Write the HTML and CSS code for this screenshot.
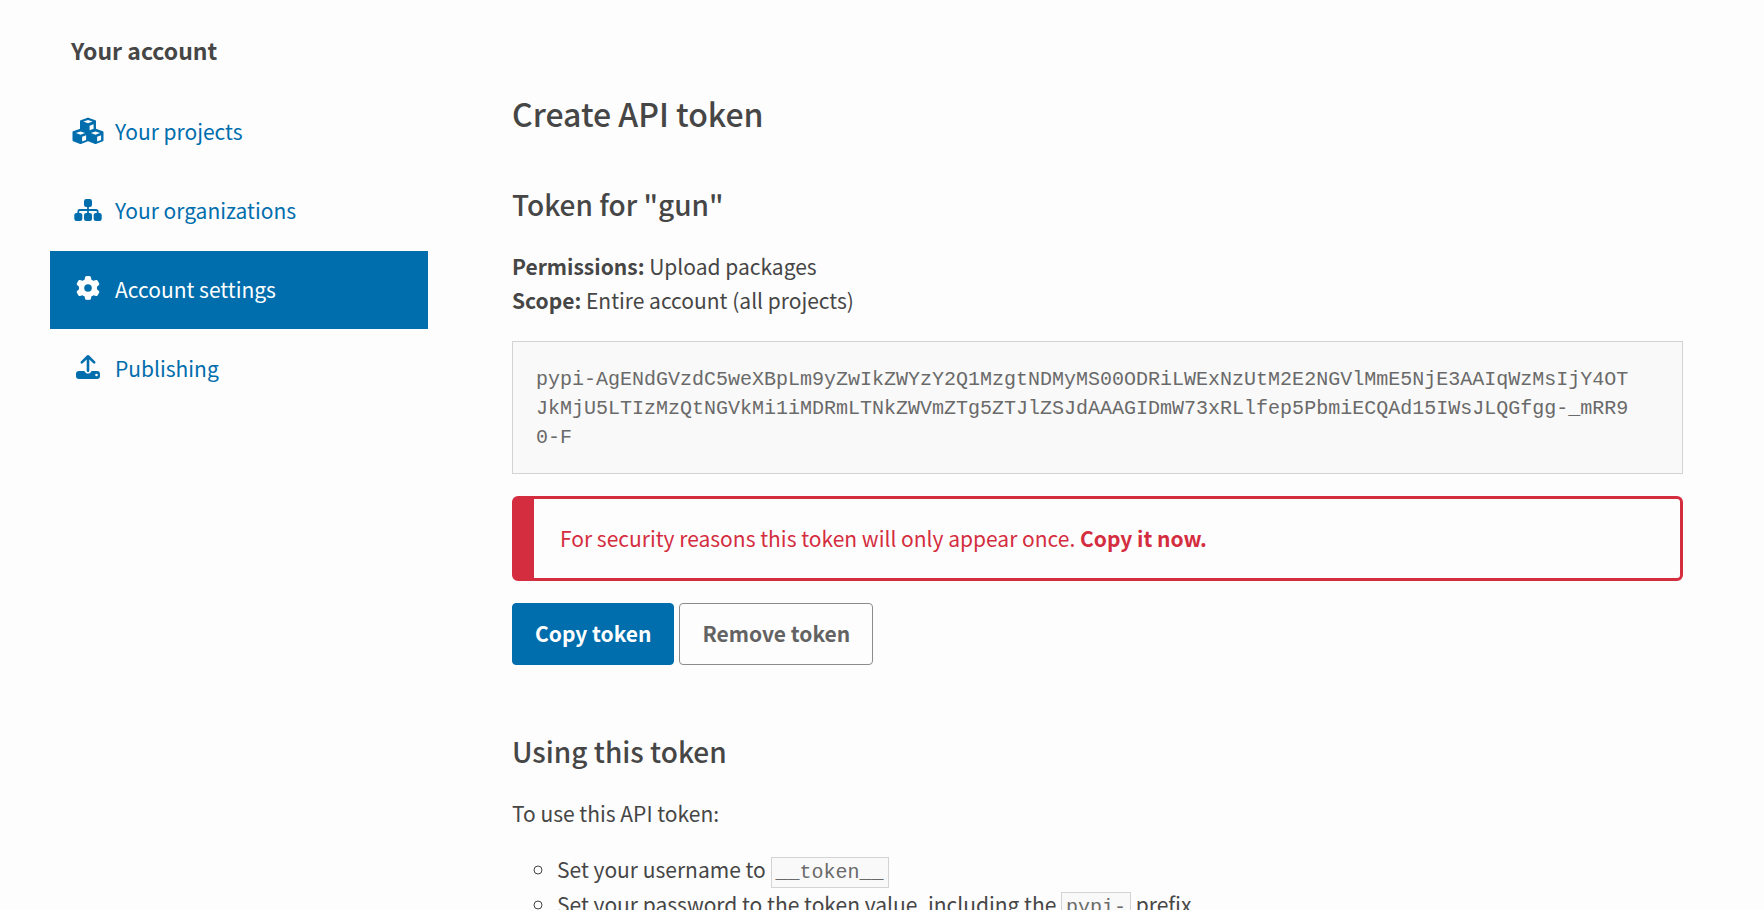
FILE: index.html
```html
<!DOCTYPE html>
<html lang="en">
<head>
<meta charset="utf-8">
<meta name="viewport" content="width=device-width, initial-scale=1">
<title>Create API token</title>
<link rel="stylesheet" href="styles.css">
</head>
<body>
<div class="layout">
  <aside class="sidebar">
    <h2 class="sidebar-title">Your account</h2>
    <nav class="menu" aria-label="Your account">
      <a class="menu-link" href="#projects">
        <svg class="icon" viewBox="0 0 32 28" aria-hidden="true">
          <g fill="currentColor" stroke="currentColor" stroke-width="2" stroke-linejoin="round">
            <path d="M16 1.600l7 2.600v8l-7 2.800-7-2.800v-8z"/>
            <path d="M8.500 12.600l7 2.600v8l-7 2.800-7-2.800v-8z"/>
            <path d="M23.500 12.600l7 2.600v8l-7 2.800-7-2.800v-8z"/>
          </g>
          <g class="icon-cut">
            <path d="M16 3l4.600 1.600L16 6.300l-4.600-1.700z"/>
            <path d="M17.600 8.700l4-1.500v4.600l-4 1.500z"/>
            <path d="M8.500 14.500l4.600 1.600-4.600 1.700-4.600-1.700z"/>
            <path d="M10.100 19.800l4-1.500v4.600l-4 1.500z"/>
            <path d="M23.500 14.500l4.600 1.600-4.600 1.700-4.600-1.700z"/>
            <path d="M25.100 19.800l4-1.500v4.600l-4 1.500z"/>
          </g>
        </svg>
        <span>Your projects</span>
      </a>
      <a class="menu-link" href="#organizations">
        <svg class="icon" viewBox="0 0 32 28" aria-hidden="true">
          <g fill="currentColor">
            <rect x="12" y="3" width="8" height="8" rx="2.200"/>
            <rect x="2.300" y="17" width="8" height="8" rx="2.200"/>
            <rect x="12" y="17" width="8" height="8" rx="2.200"/>
            <rect x="21.700" y="17" width="8" height="8" rx="2.200"/>
          </g>
          <path d="M16 10v8M6.300 18v-2.500a1.500 1.500 0 0 1 1.500-1.500h16.400a1.500 1.500 0 0 1 1.500 1.500V18" fill="none" stroke="currentColor" stroke-width="1.800"/>
        </svg>
        <span>Your organizations</span>
      </a>
      <a class="menu-link menu-link-active" href="#settings" aria-current="page">
        <svg class="icon" viewBox="0 0 32 28" aria-hidden="true">
          <g transform="translate(4 1) scale(.046875)">
            <path fill="currentColor" d="M495.900 166.600c3.200 8.700 .5 18.400-6.400 24.600l-43.300 39.400c1.100 8.300 1.700 16.800 1.700 25.400s-.6 17.100-1.700 25.400l43.300 39.400c6.900 6.200 9.600 15.900 6.400 24.600c-4.400 11.900-9.700 23.300-15.800 34.300l-4.700 8.100c-6.600 11-14 21.400-22.100 31.200c-5.900 7.200-15.700 9.600-24.500 6.800l-55.700-17.700c-13.400 10.300-28.200 18.900-44 25.400l-12.500 57.100c-2 9.100-9 16.300-18.200 17.800c-13.800 2.300-28 3.500-42.500 3.500s-28.700-1.200-42.500-3.500c-9.200-1.500-16.200-8.700-18.200-17.800l-12.500-57.100c-15.800-6.500-30.600-15.100-44-25.400L83.100 425.900c-8.800 2.800-18.600 .3-24.500-6.800c-8.100-9.800-15.500-20.200-22.100-31.200l-4.700-8.100c-6.100-11-11.400-22.400-15.800-34.300c-3.200-8.700-.5-18.400 6.400-24.600l43.300-39.400C64.600 273.100 64 264.600 64 256s.6-17.100 1.700-25.400L22.400 191.200c-6.900-6.200-9.600-15.900-6.400-24.600c4.400-11.900 9.700-23.300 15.800-34.300l4.700-8.100c6.600-11 14-21.400 22.100-31.200c5.900-7.200 15.700-9.600 24.500-6.800l55.700 17.700c13.400-10.300 28.200-18.900 44-25.400l12.500-57.100c2-9.100 9-16.300 18.200-17.800C227.300 1.200 241.500 0 256 0s28.700 1.200 42.500 3.500c9.200 1.500 16.200 8.700 18.200 17.800l12.500 57.100c15.800 6.500 30.600 15.100 44 25.400l55.700-17.700c8.800-2.800 18.600-.3 24.500 6.800c8.100 9.800 15.500 20.200 22.100 31.200l4.700 8.100c6.100 11 11.400 22.400 15.800 34.300zM256 336a80 80 0 1 0 0-160 80 80 0 1 0 0 160z"/>
          </g>
        </svg>
        <span>Account settings</span>
      </a>
      <a class="menu-link" href="#publishing">
        <svg class="icon" viewBox="0 0 32 28" aria-hidden="true">
          <g transform="translate(0 -1)">
            <path fill="currentColor" fill-rule="evenodd" d="M7 18h5.500c.4 1.500 1.800 2.600 3.500 2.600s3.100-1.100 3.500-2.600H25a3 3 0 0 1 3 3v2a3 3 0 0 1-3 3H7a3 3 0 0 1-3-3v-2a3 3 0 0 1 3-3zM24.500 20.700a1.300 1.300 0 1 0 0 2.600 1.300 1.300 0 0 0 0-2.600z"/>
            <path d="M16 17.700V4.200M9.800 9.400L16 3.300l6.200 6.100" fill="none" stroke="currentColor" stroke-width="2.600" stroke-linecap="round" stroke-linejoin="round"/>
          </g>
        </svg>
        <span>Publishing</span>
      </a>
    </nav>
  </aside>

  <main class="content">
    <h1 class="page-title">Create API token</h1>
    <section class="section">
      <h2 class="section-title">Token for "gun"</h2>
      <p class="text"><b>Permissions:</b> Upload packages<br><b>Scope:</b> Entire account (all projects)</p>
      <div class="token"><code class="token-value">pypi-AgENdGVzdC5weXBpLm9yZwIkZWYzY2Q1MzgtNDMyMS00ODRiLWExNzUtM2E2NGVlMmE5NjE3AAIqWzMsIjY4OTJkMjU5LTIzMzQtNGVkMi1iMDRmLTNkZWVmZTg5ZTJlZSJdAAAGIDmW73xRLlfep5PbmiECQAd15IWsJLQGfgg-_mRR90-F</code></div>
      <p class="alert" role="alert">For security reasons this token will only appear once. <b>Copy it now.</b></p>
      <div class="actions">
        <button class="button button-primary" type="button">Copy token</button>
        <button class="button" type="button">Remove token</button>
      </div>
    </section>
    <section class="section">
      <h2 class="section-title">Using this token</h2>
      <p class="text">To use this API token:</p>
      <ul class="steps">
        <li>Set your username to <code class="code">__token__</code></li>
        <li>Set your password to the token value, including the <code class="code">pypi-</code> prefix</li>
      </ul>
    </section>
  </main>
</div>
</body>
</html>
```

FILE: styles.css
```css
* {
  box-sizing: border-box;
}

html {
  overflow: hidden;
}

body {
  margin: 0;
  height: 100vh;
  overflow: hidden;
  background: #fdfdfd;
  color: #464646;
  font-family: "Noto Sans CJK SC", "Open Sans", sans-serif;
  font-size: 21px;
  line-height: 34px;
}

h1,
h2,
p,
ul {
  margin: 0;
}

h1,
h2 {
  font-weight: 500;
}

.layout {
  display: grid;
  grid-template-columns: 378px minmax(0, 1fr);
  gap: 84px;
  padding: 33px 81px 0 50px;
}

.sidebar-title {
  padding: 0 21px;
  font-size: 23px;
  font-weight: 700;
  line-height: 34px;
}

.menu {
  display: flex;
  flex-direction: column;
  gap: 1px;
  margin-top: 26px;
}

.menu-link {
  display: flex;
  align-items: center;
  gap: 11px;
  padding: 21px 22px 23px;
  color: #006dad;
  text-decoration: none;
}

.menu-link-active {
  background: #006dad;
  color: #fff;
}

.icon {
  flex: none;
  width: 32px;
  height: 28px;
}

.icon-cut {
  fill: #fdfdfd;
}

.content {
  padding-top: 57px;
}

.page-title {
  font-size: 32px;
  line-height: 46px;
}

.section {
  margin-top: 48px;
}

.section + .section {
  margin-top: 66px;
}

.section-title {
  margin-bottom: 25px;
  font-size: 28px;
  line-height: 40px;
}

.token {
  margin-top: 24px;
  padding: 23px 23px 21px;
  border: 1px solid #d3d3d3;
  background: #f9f9f9;
}

.token-value {
  display: block;
  max-width: 91ch;
  overflow-wrap: anywhere;
  word-break: break-all;
  color: #6a6a6a;
  font-family: "Liberation Mono", monospace;
  font-size: 20px;
  line-height: 29px;
}

.alert {
  margin-top: 22px;
  padding: 22px 26px 23px;
  border: 3px solid #d42d3f;
  border-left-width: 22px;
  border-radius: 6px;
  color: #d42d3f;
}

.actions {
  display: flex;
  gap: 5px;
  margin-top: 22px;
}

.button {
  padding: 12px 22px 14px;
  border: 1px solid #8c8c8c;
  border-radius: 4px;
  background: #fdfdfd;
  color: #636363;
  font: inherit;
  font-weight: 700;
}

.button-primary {
  border-color: #006dad;
  background: #006dad;
  color: #fff;
}

.steps {
  margin-top: 22px;
  padding-left: 45px;
  list-style: circle;
}

.code {
  padding: 3px 4px;
  border: 1px solid #d3d3d3;
  background: #f9f9f9;
  color: #6a6a6a;
  font-family: "Liberation Mono", monospace;
  font-size: 20px;
  line-height: 29px;
}
```
